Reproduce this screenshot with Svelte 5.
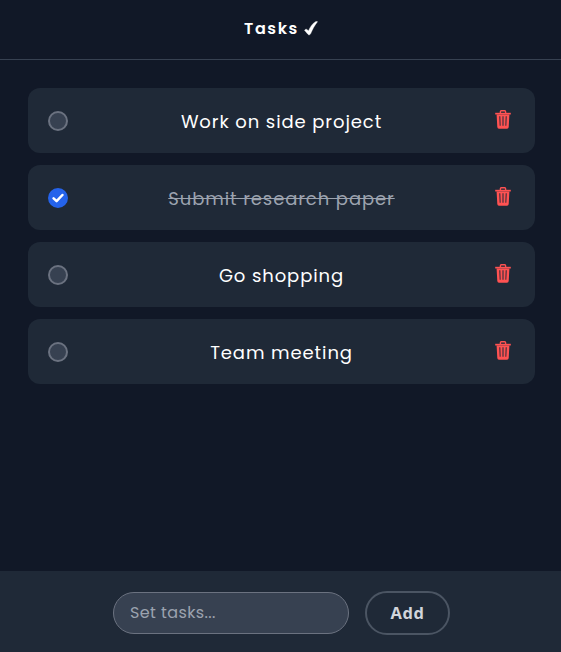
<script>
  let tasks = $state([
    { id: 1, title: 'Work on side project', done: false },
    { id: 2, title: 'Submit research paper', done: true },
    { id: 3, title: 'Go shopping', done: false },
    { id: 4, title: 'Team meeting', done: false }
  ]);
  let draft = $state('');

  function addTask(event) {
    event.preventDefault();
    const title = draft.trim();
    if (!title) return;
    tasks.push({ id: Date.now(), title, done: false });
    draft = '';
  }

  function removeTask(id) {
    tasks = tasks.filter((task) => task.id !== id);
  }
</script>

<div class="app">
  <header>
    <h1>Tasks</h1>
    <svg class="mark" width="14" height="15" viewBox="0 0 14 15" aria-hidden="true">
      <path d="M.5 9.2c.9-1.2 2.200-1.200 2.900-.4l1 1.200C6.400 5.500 8.500 2.500 11.200.9c.7-.4 1.700-.5 2.300-.2C10.800 4 8.500 8.200 6.700 12.600c-.7 1.600-2.300 1.600-3 .4z" fill="#fff" stroke="#fff" stroke-width=".4" />
    </svg>
  </header>

  <main>
    {#each tasks as task (task.id)}
      <div class="card">
        <button
          class="toggle"
          class:checked={task.done}
          aria-label="Toggle task"
          onclick={() => (task.done = !task.done)}
        >
          {#if task.done}
            <svg width="12" height="10" viewBox="0 0 12 10">
              <path d="M1.6 5.3 4.600 8.100 10.400 2" fill="none" stroke="#fff" stroke-width="2.5" stroke-linecap="round" stroke-linejoin="round" />
            </svg>
          {/if}
        </button>
        <span class="title" class:done={task.done}>{task.title}</span>
        <button class="remove" aria-label="Delete task" onclick={() => removeTask(task.id)}>
          <svg width="16" height="19" viewBox="0 0 16 19">
            <path d="M5.400 3.500V1.700q0-.9.9-.9h3.400q.9 0 .9.900v1.800" fill="none" stroke="#ff5252" stroke-width="1.400" />
            <path d="M.2 2.800h15.600v1.700H.2z" fill="#ff5252" />
            <path fill-rule="evenodd" d="M1.600 4.400h12.800l-.7 12.600q-.1 1.700-1.700 1.700H4q-1.600 0-1.700-1.700zM4.300 6.300l.4 9.500h.9l-.3-9.500zM7.500 6.300v9.500h1V6.300zM10.700 6.300l-.3 9.500h.9l.4-9.500z" fill="#ff5252" />
          </svg>
        </button>
      </div>
    {/each}
  </main>

  <form onsubmit={addTask}>
    <input placeholder="Set tasks..." bind:value={draft} />
    <button class="add" type="submit">Add</button>
  </form>
</div>

<style>
  :global(body) {
    background: #111827;
  }
  .app {
    display: flex;
    flex-direction: column;
    height: 100vh;
    overflow: hidden;
    background: #111827;
    color: #fff;
    font-family: Poppins, Inter, sans-serif;
  }
  .app * {
    box-sizing: border-box;
  }
  header {
    display: flex;
    align-items: center;
    justify-content: center;
    gap: 5px;
    height: 60px;
    padding: 0 0 2px 1px;
    border-bottom: 1px solid #374151;
  }
  h1 {
    margin: 0;
    padding-top: 1px;
    font-size: 16px;
    line-height: 24px;
    font-weight: 600;
    letter-spacing: 1.6px;
  }
  .mark {
    margin-bottom: 1px;
  }
  main {
    flex: 1;
    display: flex;
    flex-direction: column;
    gap: 12px;
    padding: 28px 26px 0 28px;
  }
  .card {
    display: flex;
    align-items: center;
    height: 65px;
    padding: 0 24px 0 20px;
    border-radius: 12px;
    background: #1f2937;
  }
  button {
    padding: 0;
    font-family: inherit;
    cursor: pointer;
  }
  .toggle {
    display: flex;
    align-items: center;
    justify-content: center;
    width: 20px;
    height: 20px;
    border: 2px solid #6b7280;
    border-radius: 50%;
    background: #374151;
  }
  .toggle.checked {
    border-color: #2563eb;
    background: #2563eb;
  }
  .toggle svg {
    flex: none;
  }
  .title {
    flex: 1;
    padding-top: 2px;
    text-align: center;
    font-size: 18px;
    line-height: 28px;
    letter-spacing: 0.9px;
    white-space: nowrap;
  }
  .title.done {
    color: #9ca3af;
    text-decoration: line-through;
    text-decoration-thickness: 1px;
  }
  .remove {
    display: flex;
    border: 0;
    background: none;
    margin-bottom: 2px;
  }
  form {
    display: flex;
    align-items: center;
    justify-content: center;
    gap: 16px;
    height: 81px;
    padding: 3px 0 0 2px;
    background: #1f2937;
  }
  input {
    width: 236px;
    height: 42px;
    padding: 0 16px 2px;
    border: 1px solid #6b7280;
    border-radius: 21px;
    outline: none;
    background: #374151;
    color: #fff;
    font: 400 16px Poppins, Inter, sans-serif;
    letter-spacing: 0.4px;
  }
  input::placeholder {
    color: #9ca3af;
    opacity: 1;
  }
  .add {
    width: 85px;
    height: 44px;
    padding-bottom: 2px;
    border: 2px solid #4b5563;
    border-radius: 22px;
    background: transparent;
    color: #d1d5db;
    font-family: 'Open Sans', 'Noto Sans', sans-serif;
    font-size: 16.5px;
    font-weight: 700;
    letter-spacing: 0.5px;
  }
</style>
